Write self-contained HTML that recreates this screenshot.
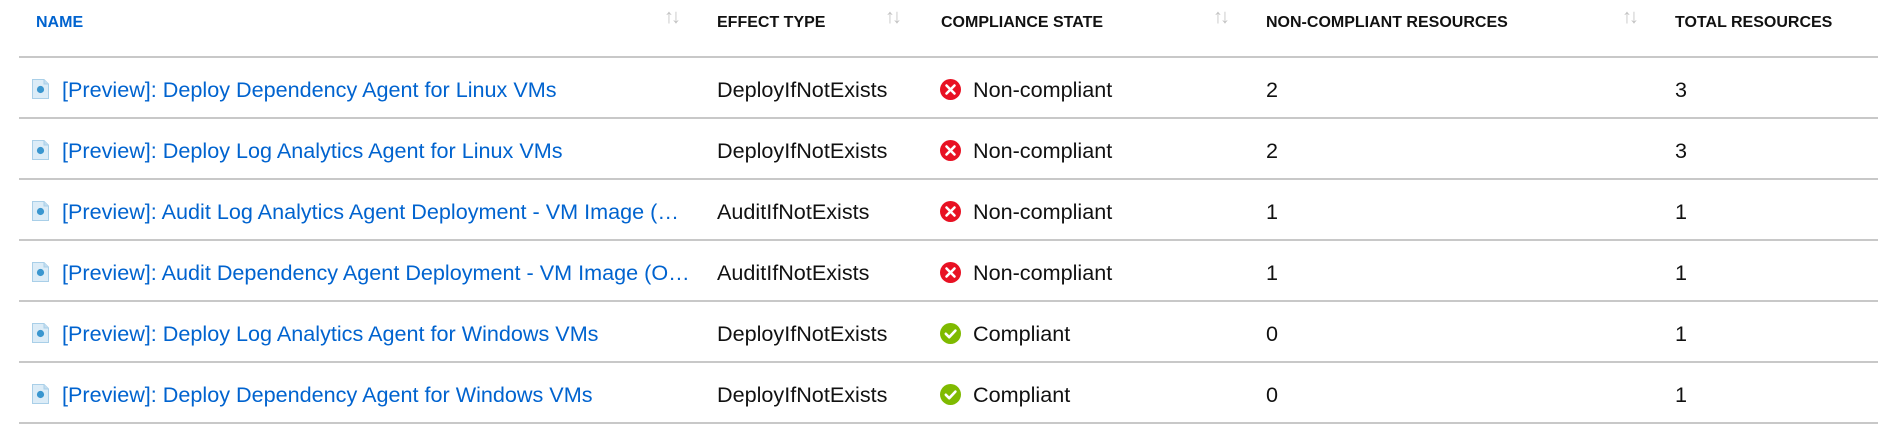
<!DOCTYPE html>
<html><head><meta charset="utf-8"><style>
body{margin:0;width:1883px;height:444px;background:#fff;position:relative;overflow:hidden;font-family:"Liberation Sans",Arial,sans-serif;}
.h{position:absolute;top:12px;font-size:16px;font-weight:bold;color:#111;line-height:22px;white-space:nowrap}
.s{position:absolute;top:6px;font-size:20px;color:#c4c4c4;letter-spacing:-3px}
.line{position:absolute;left:19px;width:1859px;height:2px;background:#c8c8c8}
.c{position:absolute;font-size:21.6px;color:#111;line-height:26px;white-space:nowrap;margin-top:2px}
.n{color:#0063cf;overflow:hidden;text-overflow:ellipsis;width:633px}
.ic{position:absolute;left:32px;width:17px;height:20px}
.st{position:absolute;left:940px;width:21px;height:21px}
</style></head><body>
<div class="h" style="left:36px;color:#0063cf">NAME</div>
<div class="s" style="left:664px">↑↓</div>
<div class="h" style="left:717px">EFFECT TYPE</div>
<div class="s" style="left:885px">↑↓</div>
<div class="h" style="left:941px">COMPLIANCE STATE</div>
<div class="s" style="left:1213px">↑↓</div>
<div class="h" style="left:1266px">NON-COMPLIANT RESOURCES</div>
<div class="s" style="left:1622px">↑↓</div>
<div class="h" style="left:1675px">TOTAL RESOURCES</div>

<div class="line" style="top:56px"></div>
<div class="line" style="top:117px"></div>
<div class="line" style="top:178px"></div>
<div class="line" style="top:239px"></div>
<div class="line" style="top:300px"></div>
<div class="line" style="top:361px"></div>
<div class="line" style="top:422px"></div>

<svg width="0" height="0" style="position:absolute"><defs>
<g id="doc"><path d="M0.5 0.5H12L16.5 5V19.5H0.5Z" fill="#dcecf7" stroke="#a9cfe8"/><path d="M12 0.5V5H16.5" fill="#c3def0" stroke="#a9cfe8"/><circle cx="8.5" cy="10.5" r="3.6" fill="#3a96cf"/></g>
<g id="bad"><circle cx="10.5" cy="10.5" r="10.5" fill="#e81123"/><path d="M6.5 6.5L14.5 14.5M14.5 6.5L6.5 14.5" stroke="#fff" stroke-width="2.6" stroke-linecap="round"/></g>
<g id="ok"><circle cx="10.5" cy="10.5" r="10.5" fill="#7fba00"/><path d="M5.8 10.8L9.2 14.2L15.4 7.6" stroke="#fff" stroke-width="2.6" fill="none" stroke-linecap="round" stroke-linejoin="round"/></g>
</defs></svg>

<svg class="ic" style="top:79px"><use href="#doc"/></svg>
<div class="c n" style="left:62px;top:75px">[Preview]: Deploy Dependency Agent for Linux VMs</div>
<div class="c" style="left:717px;top:75px">DeployIfNotExists</div>
<svg class="st" style="top:79px"><use href="#bad"/></svg>
<div class="c" style="left:973px;top:75px">Non-compliant</div>
<div class="c" style="left:1266px;top:75px">2</div>
<div class="c" style="left:1675px;top:75px">3</div>

<svg class="ic" style="top:140px"><use href="#doc"/></svg>
<div class="c n" style="left:62px;top:136px">[Preview]: Deploy Log Analytics Agent for Linux VMs</div>
<div class="c" style="left:717px;top:136px">DeployIfNotExists</div>
<svg class="st" style="top:140px"><use href="#bad"/></svg>
<div class="c" style="left:973px;top:136px">Non-compliant</div>
<div class="c" style="left:1266px;top:136px">2</div>
<div class="c" style="left:1675px;top:136px">3</div>

<svg class="ic" style="top:201px"><use href="#doc"/></svg>
<div class="c n" style="left:62px;top:197px">[Preview]: Audit Log Analytics Agent Deployment - VM Image (OS) unlisted</div>
<div class="c" style="left:717px;top:197px">AuditIfNotExists</div>
<svg class="st" style="top:201px"><use href="#bad"/></svg>
<div class="c" style="left:973px;top:197px">Non-compliant</div>
<div class="c" style="left:1266px;top:197px">1</div>
<div class="c" style="left:1675px;top:197px">1</div>

<svg class="ic" style="top:262px"><use href="#doc"/></svg>
<div class="c n" style="left:62px;top:258px">[Preview]: Audit Dependency Agent Deployment - VM Image (OS) unlisted</div>
<div class="c" style="left:717px;top:258px">AuditIfNotExists</div>
<svg class="st" style="top:262px"><use href="#bad"/></svg>
<div class="c" style="left:973px;top:258px">Non-compliant</div>
<div class="c" style="left:1266px;top:258px">1</div>
<div class="c" style="left:1675px;top:258px">1</div>

<svg class="ic" style="top:323px"><use href="#doc"/></svg>
<div class="c n" style="left:62px;top:319px">[Preview]: Deploy Log Analytics Agent for Windows VMs</div>
<div class="c" style="left:717px;top:319px">DeployIfNotExists</div>
<svg class="st" style="top:323px"><use href="#ok"/></svg>
<div class="c" style="left:973px;top:319px">Compliant</div>
<div class="c" style="left:1266px;top:319px">0</div>
<div class="c" style="left:1675px;top:319px">1</div>

<svg class="ic" style="top:384px"><use href="#doc"/></svg>
<div class="c n" style="left:62px;top:380px">[Preview]: Deploy Dependency Agent for Windows VMs</div>
<div class="c" style="left:717px;top:380px">DeployIfNotExists</div>
<svg class="st" style="top:384px"><use href="#ok"/></svg>
<div class="c" style="left:973px;top:380px">Compliant</div>
<div class="c" style="left:1266px;top:380px">0</div>
<div class="c" style="left:1675px;top:380px">1</div>
</body></html>
